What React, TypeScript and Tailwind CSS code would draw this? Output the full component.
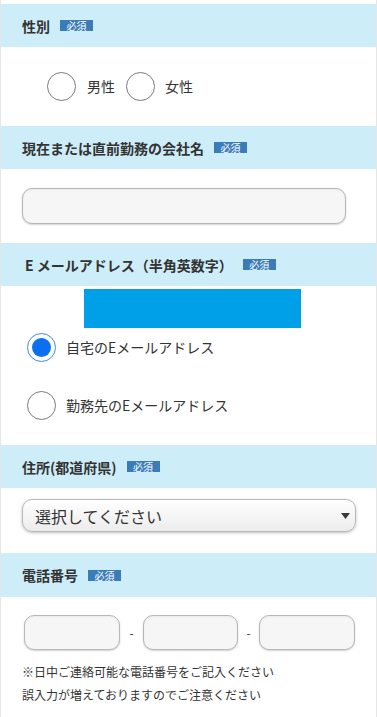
import type { ReactNode } from "react";

const font = { fontFamily: '"Noto Sans CJK JP", "Noto Sans", sans-serif' };

function Badge() {
  return (
    <span className="inline-flex h-[11px] w-[33px] items-center justify-center bg-[#3b7cb8] text-[10px] leading-[11px] text-white">
      必須
    </span>
  );
}

function SectionHeader({ children, className = "pl-[21px]" }: { children: ReactNode; className?: string }) {
  return (
    <div className={`flex h-[43px] items-center gap-[10px] bg-[#cdedf9] ${className}`}>
      <span className="text-[14px] font-bold leading-none text-[#333333]">{children}</span>
      <Badge />
    </div>
  );
}

function Radio({ checked = false, className = "" }: { checked?: boolean; className?: string }) {
  return checked ? (
    <span
      className={`flex h-[29px] w-[29px] shrink-0 items-center justify-center rounded-full border border-[#3d8ae6] bg-white ${className}`}
    >
      <span className="h-[19px] w-[19px] rounded-full bg-[#0b6ff0]" />
    </span>
  ) : (
    <span className={`block h-[29px] w-[29px] shrink-0 rounded-full border border-[#7a7a7a] bg-white ${className}`} />
  );
}

function TextBox({ className = "" }: { className?: string }) {
  return (
    <div
      className={`rounded-[10px] border border-[#b8b8b8] bg-[#f6f6f6] shadow-[0_1px_2px_rgba(0,0,0,0.18),inset_0_1px_2px_rgba(0,0,0,0.05)] ${className}`}
    />
  );
}

export default function App() {
  return (
    <div className="min-h-[717px] w-[377px] border-x border-[#e6e6e6] bg-white pt-[4px] text-[#333333]" style={font}>
      <SectionHeader>性別</SectionHeader>
      <div className="flex h-[79px] items-center pl-[46px] text-[14px]">
        <Radio />
        <span className="ml-[11px]">男性</span>
        <Radio className="ml-[11px]" />
        <span className="ml-[10px]">女性</span>
      </div>

      <SectionHeader>現在または直前勤務の会社名</SectionHeader>
      <div className="flex h-[74px] items-center px-[21px]">
        <TextBox className="h-[36px] w-[324px]" />
      </div>

      <SectionHeader className="pl-[24px]">E メールアドレス（半角英数字）</SectionHeader>
      <div className="h-[159px] pt-[3px] text-[14px]">
        <div className="ml-[83px] h-[39px] w-[217px] bg-[#00a0e9]" />
        <div className="mt-[5px] flex items-center gap-[10px] pl-[26px]">
          <Radio checked />
          <span>自宅のEメールアドレス</span>
        </div>
        <div className="mt-[29px] flex items-center gap-[10px] pl-[26px]">
          <Radio />
          <span>勤務先のEメールアドレス</span>
        </div>
      </div>

      <SectionHeader>住所(都道府県)</SectionHeader>
      <div className="h-[65px] px-[21px] pt-[11px]">
        <div className="flex h-[33px] w-[334px] items-center justify-between rounded-[10px] border border-[#b8b8b8] bg-gradient-to-b from-white to-[#ececec] pl-[12px] pr-[5px] shadow-[0_1px_3px_rgba(0,0,0,0.25)]">
          <span className="text-[16px] leading-none">選択してください</span>
          <svg width="9" height="6" viewBox="0 0 9 6">
            <path d="M0 0 L9 0 L4.5 6 Z" fill="#3a3a3a" />
          </svg>
        </div>
      </div>

      <div className="flex h-[44px] items-center gap-[10px] bg-[#cdedf9] pl-[21px]">
        <span className="text-[14px] font-bold leading-none">電話番号</span>
        <Badge />
      </div>
      <div className="pt-[18px]">
        <div className="flex items-center pl-[23px]">
          <TextBox className="h-[35px] w-[96px]" />
          <span className="w-[23px] text-center text-[12px]">-</span>
          <TextBox className="h-[35px] w-[95px]" />
          <span className="w-[21px] text-center text-[12px]">-</span>
          <TextBox className="h-[35px] w-[96px]" />
        </div>
        <div className="mt-[10px] pl-[21px] text-[12px] leading-[23px]">
          <p>※日中ご連絡可能な電話番号をご記入ください</p>
          <p>誤入力が増えておりますのでご注意ください</p>
        </div>
      </div>
    </div>
  );
}
